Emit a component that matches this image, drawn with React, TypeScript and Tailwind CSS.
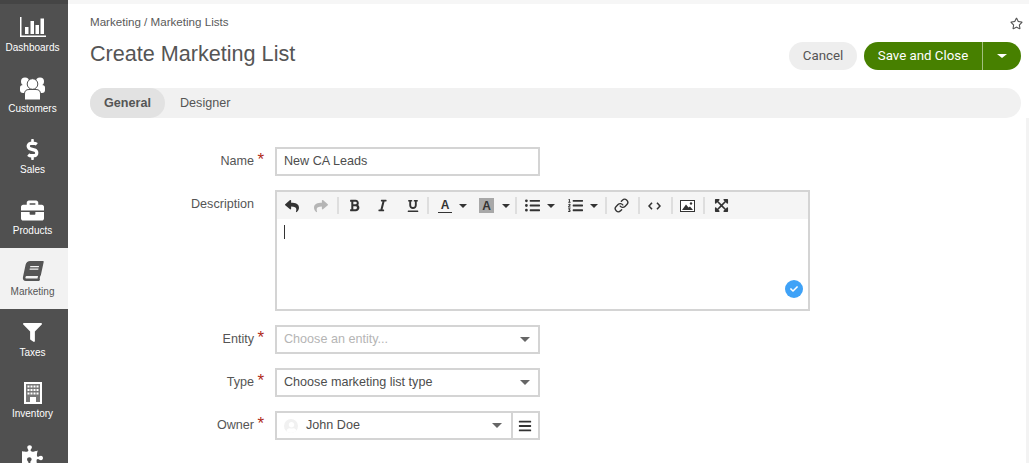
import type { ReactNode } from 'react'
import { Link } from 'lucide-react'
import {
  FaBold,
  FaBook,
  FaBriefcase,
  FaCheck,
  FaDollarSign,
  FaExpandArrowsAlt,
  FaFilter,
  FaItalic,
  FaListOl,
  FaListUl,
  FaPuzzlePiece,
  FaRegStar,
  FaReply,
  FaShare,
  FaUnderline,
  FaBars,
  FaUser,
} from 'react-icons/fa'

function BarsIcon() {
  return (
    <svg width="26" height="20" viewBox="0 0 26 20" fill="currentColor">
      <rect x="0" y="0" width="1.5" height="20" />
      <rect x="0" y="18.5" width="26" height="1.5" />
      <rect x="5" y="10" width="3.5" height="7" />
      <rect x="10.5" y="4" width="3.5" height="13" />
      <rect x="15.5" y="8" width="3.5" height="9" />
      <rect x="20.5" y="1.5" width="3.5" height="15.5" />
    </svg>
  )
}

function PeopleIcon() {
  return (
    <svg width="25" height="23" viewBox="0 0 25 23" fill="#fff">
      <circle cx="5" cy="4.5" r="4" />
      <circle cx="20" cy="4.5" r="4" />
      <path d="M0 10.5 Q0 8 3 8 L7 8 Q10 8 10 11 L10 16 L3 16 Q0 16 0 13 Z" />
      <path d="M25 10.5 Q25 8 22 8 L18 8 Q15 8 15 11 L15 16 L22 16 Q25 16 25 13 Z" />
      <circle cx="12.5" cy="7" r="5.3" stroke="#505050" strokeWidth="1" />
      <path d="M4.5 23 L4.5 17 Q4.5 12.5 9 12.5 L16 12.5 Q20.5 12.5 20.5 17 L20.5 23 Z" stroke="#505050" strokeWidth="1" />
    </svg>
  )
}

function BuildingIcon() {
  return (
    <svg width="18" height="22" viewBox="0 0 18 22">
      <rect x="0" y="0" width="18" height="22" fill="#fff" />
      <rect x="2" y="2" width="14" height="18" fill="#777" />
      <g fill="#fff">
        <rect x="3.5" y="3.5" width="2" height="2" />
        <rect x="6.5" y="3.5" width="2" height="2" />
        <rect x="9.5" y="3.5" width="2" height="2" />
        <rect x="12.5" y="3.5" width="2" height="2" />
        <rect x="3.5" y="7" width="2" height="2" />
        <rect x="6.5" y="7" width="2" height="2" />
        <rect x="9.5" y="7" width="2" height="2" />
        <rect x="12.5" y="7" width="2" height="2" />
        <rect x="3.5" y="10.5" width="2" height="2" />
        <rect x="6.5" y="10.5" width="2" height="2" />
        <rect x="9.5" y="10.5" width="2" height="2" />
        <rect x="12.5" y="10.5" width="2" height="2" />
        <rect x="6" y="15" width="6" height="5" />
      </g>
    </svg>
  )
}

function PictureIcon() {
  return (
    <svg width="15" height="12" viewBox="0 0 15 12">
      <rect x="0.5" y="0.5" width="14" height="11" fill="#fff" stroke="#333" />
      <path d="M2 10 L6 4.5 L8.5 7.5 L10 6.5 L13 10 Z" fill="#333" />
      <circle cx="11" cy="3.5" r="1.2" fill="#333" />
    </svg>
  )
}

function CodeIcon() {
  return (
    <svg width="13" height="8" viewBox="0 0 13 8" fill="none" stroke="#333" strokeWidth="1.6">
      <path d="M4 0.8 L1 4 L4 7.2" />
      <path d="M9 0.8 L12 4 L9 7.2" />
    </svg>
  )
}

const navItems: { label: string; icon: ReactNode; active?: boolean }[] = [
  { label: 'Dashboards', icon: <BarsIcon /> },
  { label: 'Customers', icon: <PeopleIcon /> },
  { label: 'Sales', icon: <FaDollarSign size={21} /> },
  { label: 'Products', icon: <FaBriefcase size={23} /> },
  { label: 'Marketing', icon: <FaBook size={20} className="-skew-x-12" />, active: true },
  { label: 'Taxes', icon: <FaFilter size={19} /> },
  { label: 'Inventory', icon: <BuildingIcon /> },
  { label: '', icon: <FaPuzzlePiece size={21} /> },
]

function NavItem({ label, icon, active }: { label: string; icon: ReactNode; active?: boolean }) {
  return (
    <div
      className={`flex h-[61px] shrink-0 flex-col items-center pr-[3px] ${
        active ? 'bg-[#f2f2f2] text-[#555]' : 'text-white'
      }`}
    >
      <div className="flex h-[36px] w-full items-center justify-center pt-[10px]">{icon}</div>
      <div className="mt-[1px] text-[10px] leading-[14px]">{label}</div>
    </div>
  )
}

function Sep({ className = '' }: { className?: string }) {
  return <span className={`h-[17px] w-[2px] shrink-0 bg-[#dedede] ${className}`} />
}

function Caret({ className = 'border-t-[#444]' }: { className?: string }) {
  return <span className={`h-0 w-0 shrink-0 border-x-[4px] border-t-[4px] border-x-transparent ${className}`} />
}

function FormRow({ label, required, children, className = '' }: { label: string; required?: boolean; children: ReactNode; className?: string }) {
  return (
    <div className={`flex ${className}`}>
      <div className="flex w-[185px] shrink-0 justify-end pr-[11px] pt-[4px] text-[12.6px] leading-[20px] text-[#555]">
        <span className="relative mr-[10px]">
          {label}
          {required && <span className="absolute -right-[10px] -top-[1px] text-[17px] text-[#b02a18]">*</span>}
        </span>
      </div>
      {children}
    </div>
  )
}

function SelectBox({ text, muted }: { text: string; muted?: boolean }) {
  return (
    <div className="flex h-[29px] w-[265px] items-center justify-between border-2 border-[#d4d4d4] pl-[7px] pr-[8px] text-[12.6px]">
      <span className={muted ? 'text-[#b5b5b5]' : 'text-[#4d4d4d]'}>{text}</span>
      <Caret className="border-t-[#666] border-x-[5px] border-t-[5px]" />
    </div>
  )
}

export default function App() {
  return (
    <div className="flex h-[463px] w-[1029px] overflow-hidden bg-white font-['Liberation_Sans',sans-serif] text-[#4d4d4d]">
      <aside className="flex w-[68px] shrink-0 flex-col bg-[#505050]">
        <div className="h-[4px] shrink-0 bg-[#454545]" />
        {navItems.map((item) => (
          <NavItem key={item.label || 'more'} {...item} />
        ))}
      </aside>

      <main className="relative flex-1">
        <div className="h-[4px] bg-[#f6f6f6]" />
        <div className="relative pl-[22px] pr-[8px]">
          <FaRegStar size={13} className="absolute right-[6px] top-[13px] text-[#555]" />
          <div className="pt-[10px] text-[11.6px] leading-[15px] text-[#5a5a5a]">Marketing / Marketing Lists</div>
          <div className="mt-[8px] flex items-center justify-between">
            <h1 className="text-[21.6px] leading-[34px] text-[#555]">Create Marketing List</h1>
            <div className="flex items-center gap-[7px] pt-[4px] font-['Roboto',sans-serif] text-[13.3px]">
              <button className="h-[28px] w-[68px] rounded-full bg-[#eeeeee] text-[#555]">Cancel</button>
              <div className="flex h-[28px] overflow-hidden rounded-full bg-[#478000] text-white">
                <button className="w-[118px]">Save and Close</button>
                <button className="flex w-[39px] items-center justify-center border-l border-[#a3c080]">
                  <Caret className="border-t-white border-x-[5px] border-t-[4px]" />
                </button>
              </div>
            </div>
          </div>

          <div className="mt-[17px] flex h-[30px] items-center rounded-full bg-[#f1f1f1] text-[12.6px] text-[#555]">
            <div className="flex h-full w-[75px] items-center justify-center rounded-full bg-[#e2e2e2] font-bold">General</div>
            <div className="ml-[15px]">Designer</div>
          </div>

          <form className="mt-[29px]">
            <FormRow label="Name" required>
              <div className="flex h-[29px] w-[265px] items-center border-2 border-[#d4d4d4] pl-[7px] text-[12.6px] text-[#4d4d4d]">New CA Leads</div>
            </FormRow>

            <FormRow label="Description" className="mt-[14px]">
              <div className="relative h-[121px] w-[535px] border-2 border-[#d4d4d4]">
                <div className="flex h-[27px] items-center bg-[#f5f5f5] pl-[8px] text-[#333]">
                  <FaReply size={14} className="shrink-0" />
                  <FaShare size={14} className="ml-[15px] shrink-0 text-[#b5b5b5]" />
                  <Sep className="ml-[9px]" />
                  <FaBold size={13} className="ml-[9px] shrink-0" />
                  <FaItalic size={13} className="ml-[15px] shrink-0" />
                  <FaUnderline size={12} className="ml-[18px] shrink-0" />
                  <Sep className="ml-[8px]" />
                  <span className="ml-[9px] w-[14px] shrink-0 border-b border-[#333] text-center text-[12px] font-bold leading-[13px]">A</span>
                  <Caret className="ml-[7px]" />
                  <span className="ml-[12px] flex h-[15px] w-[15px] shrink-0 items-center justify-center bg-[#a8a8a8] text-[12px] font-bold">A</span>
                  <Caret className="ml-[8px]" />
                  <Sep className="ml-[5px]" />
                  <FaListUl size={15} className="ml-[8px] shrink-0" />
                  <Caret className="ml-[7px]" />
                  <FaListOl size={15} className="ml-[13px] shrink-0" />
                  <Caret className="ml-[7px]" />
                  <Sep className="ml-[7px]" />
                  <Link size={15} strokeWidth={2.2} className="ml-[7px] shrink-0" />
                  <Sep className="ml-[9px]" />
                  <span className="ml-[8px] flex shrink-0"><CodeIcon /></span>
                  <Sep className="ml-[10px]" />
                  <span className="ml-[7px] flex shrink-0"><PictureIcon /></span>
                  <Sep className="ml-[8px]" />
                  <FaExpandArrowsAlt size={15} className="ml-[9px] shrink-0" />
                </div>
                <div className="ml-[7px] mt-[6px] h-[14px] w-px bg-[#333]" />
                <span className="absolute bottom-[11px] right-[5px] flex h-[18px] w-[18px] items-center justify-center rounded-full bg-[#3fa2f7] text-white">
                  <FaCheck size={8} />
                </span>
              </div>
            </FormRow>

            <FormRow label="Entity" required className="mt-[14px]">
              <SelectBox text="Choose an entity..." muted />
            </FormRow>

            <FormRow label="Type" required className="mt-[14px]">
              <SelectBox text="Choose marketing list type" />
            </FormRow>

            <FormRow label="Owner" required className="mt-[14px]">
              <div className="flex h-[29px] w-[265px] border-2 border-[#d4d4d4] text-[12.6px] text-[#4d4d4d]">
                <div className="flex flex-1 items-center pl-[7px] pr-[9px]">
                  <span className="flex h-[14px] w-[14px] items-end justify-center overflow-hidden rounded-full bg-[#f1f1f1] text-white">
                    <FaUser size={11} />
                  </span>
                  <span className="ml-[8px] flex-1">John Doe</span>
                  <Caret className="border-t-[#666] border-x-[5px] border-t-[5px]" />
                </div>
                <div className="flex w-[27px] items-center justify-center border-l-2 border-[#d4d4d4] text-[#333]">
                  <FaBars size={14} className="-ml-[1px]" />
                </div>
              </div>
            </FormRow>
          </form>
        </div>
        <div className="absolute right-0 top-[118px] h-[345px] w-[3px] bg-[#f3f3f3]" />
      </main>
    </div>
  )
}
